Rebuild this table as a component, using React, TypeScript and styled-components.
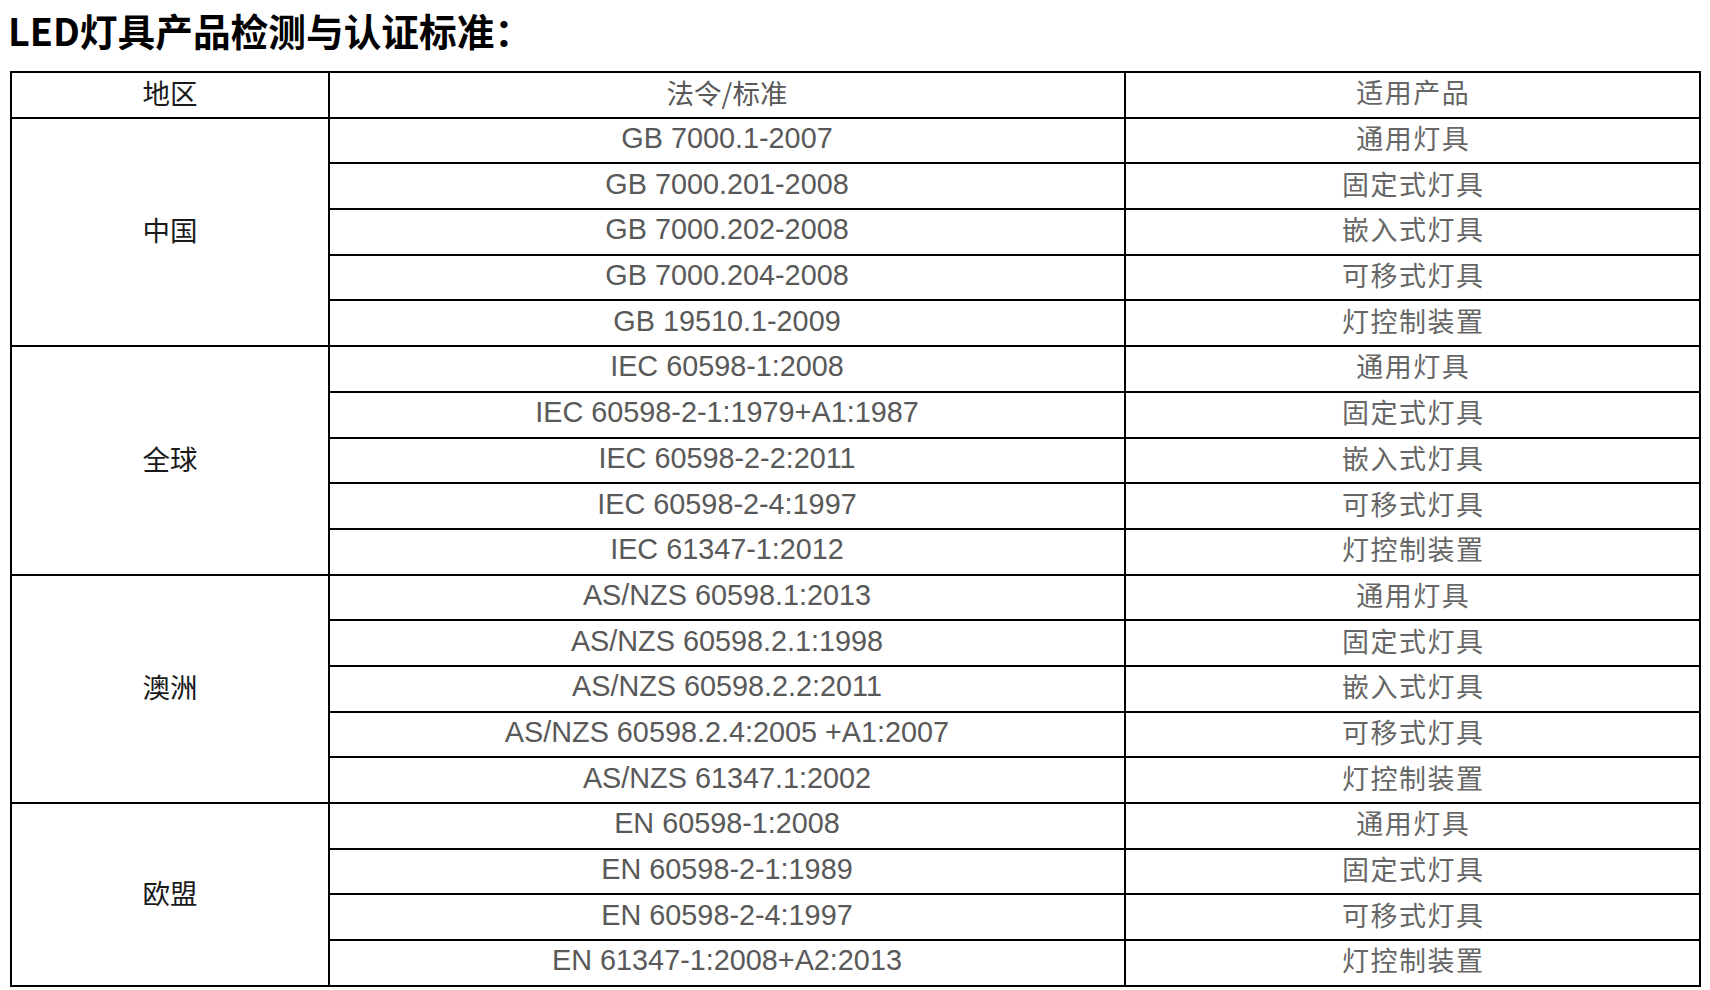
import React from "react";
import styled, { createGlobalStyle } from "styled-components";

const Global = createGlobalStyle`
  html, body { margin: 0; padding: 0; background: #ffffff; }
  body { font-family: "Liberation Sans", Arial, "Noto Sans CJK SC", sans-serif; }
`;

const Page = styled.div`
  padding: 7px 10px 0 10px;
  width: 1689px;
`;

const Title = styled.h1`
  margin: 0 0 19px -2px;
  font-family: "Noto Sans CJK SC", sans-serif;
  font-weight: 700;
  font-size: 37.7px;
  line-height: 45px;
  color: #000;
  letter-spacing: 0;
`;

const Table = styled.table`
  width: 1689px;
  border-collapse: collapse;
  table-layout: fixed;
  border: 2px solid #000;
`;

type Kind = "region" | "std" | "product" | "headStd" | "headRegion" | "headProduct";

const Cell = styled.td<{ $kind: Kind }>`
  border: 2px solid #000;
  padding: 0 0 5px 0;
  height: 38.7px;
  text-align: center;
  vertical-align: middle;
  line-height: 30px;
  white-space: nowrap;
  ${({ $kind }) => {
    switch ($kind) {
      case "region":
      case "headRegion":
        return `color: #1a1a1a; font-family: "Noto Sans CJK SC", sans-serif; font-weight: 400; font-size: 27.5px;`;
      case "headStd":
        return `color: #595959; font-family: "Noto Sans CJK SC", sans-serif; font-weight: 400; font-size: 27.5px;`;
      case "std":
        return `color: #595959; font-family: "Liberation Sans", Arial, sans-serif; font-size: 28.8px;`;
      case "product":
      case "headProduct":
        return `color: #666666; font-family: "Noto Sans CJK SC", sans-serif; font-weight: 400; font-size: 27px; letter-spacing: 1.5px; text-indent: 1.5px;`;
    }
  }}
`;

type Group = { region: string; rows: [string, string][] };

const groups: Group[] = [
  {
    region: "中国",
    rows: [
      ["GB 7000.1-2007", "通用灯具"],
      ["GB 7000.201-2008", "固定式灯具"],
      ["GB 7000.202-2008", "嵌入式灯具"],
      ["GB 7000.204-2008", "可移式灯具"],
      ["GB 19510.1-2009", "灯控制装置"],
    ],
  },
  {
    region: "全球",
    rows: [
      ["IEC 60598-1:2008", "通用灯具"],
      ["IEC 60598-2-1:1979+A1:1987", "固定式灯具"],
      ["IEC 60598-2-2:2011", "嵌入式灯具"],
      ["IEC 60598-2-4:1997", "可移式灯具"],
      ["IEC 61347-1:2012", "灯控制装置"],
    ],
  },
  {
    region: "澳洲",
    rows: [
      ["AS/NZS 60598.1:2013", "通用灯具"],
      ["AS/NZS 60598.2.1:1998", "固定式灯具"],
      ["AS/NZS 60598.2.2:2011", "嵌入式灯具"],
      ["AS/NZS 60598.2.4:2005 +A1:2007", "可移式灯具"],
      ["AS/NZS 61347.1:2002", "灯控制装置"],
    ],
  },
  {
    region: "欧盟",
    rows: [
      ["EN 60598-1:2008", "通用灯具"],
      ["EN 60598-2-1:1989", "固定式灯具"],
      ["EN 60598-2-4:1997", "可移式灯具"],
      ["EN 61347-1:2008+A2:2013", "灯控制装置"],
    ],
  },
];

export default function App() {
  return (
    <>
      <Global />
      <Page>
        <Title>LED灯具产品检测与认证标准：</Title>
        <Table>
          <colgroup>
            <col style={{ width: 318 }} />
            <col style={{ width: 796 }} />
            <col style={{ width: 575 }} />
          </colgroup>
          <tbody>
            <tr>
              <Cell $kind="headRegion">地区</Cell>
              <Cell $kind="headStd">法令/标准</Cell>
              <Cell $kind="headProduct">适用产品</Cell>
            </tr>
            {groups.map((g) =>
              g.rows.map(([std, prod], i) => (
                <tr key={g.region + i}>
                  {i === 0 && (
                    <Cell $kind="region" rowSpan={g.rows.length}>
                      {g.region}
                    </Cell>
                  )}
                  <Cell $kind="std">{std}</Cell>
                  <Cell $kind="product">{prod}</Cell>
                </tr>
              ))
            )}
          </tbody>
        </Table>
      </Page>
    </>
  );
}
